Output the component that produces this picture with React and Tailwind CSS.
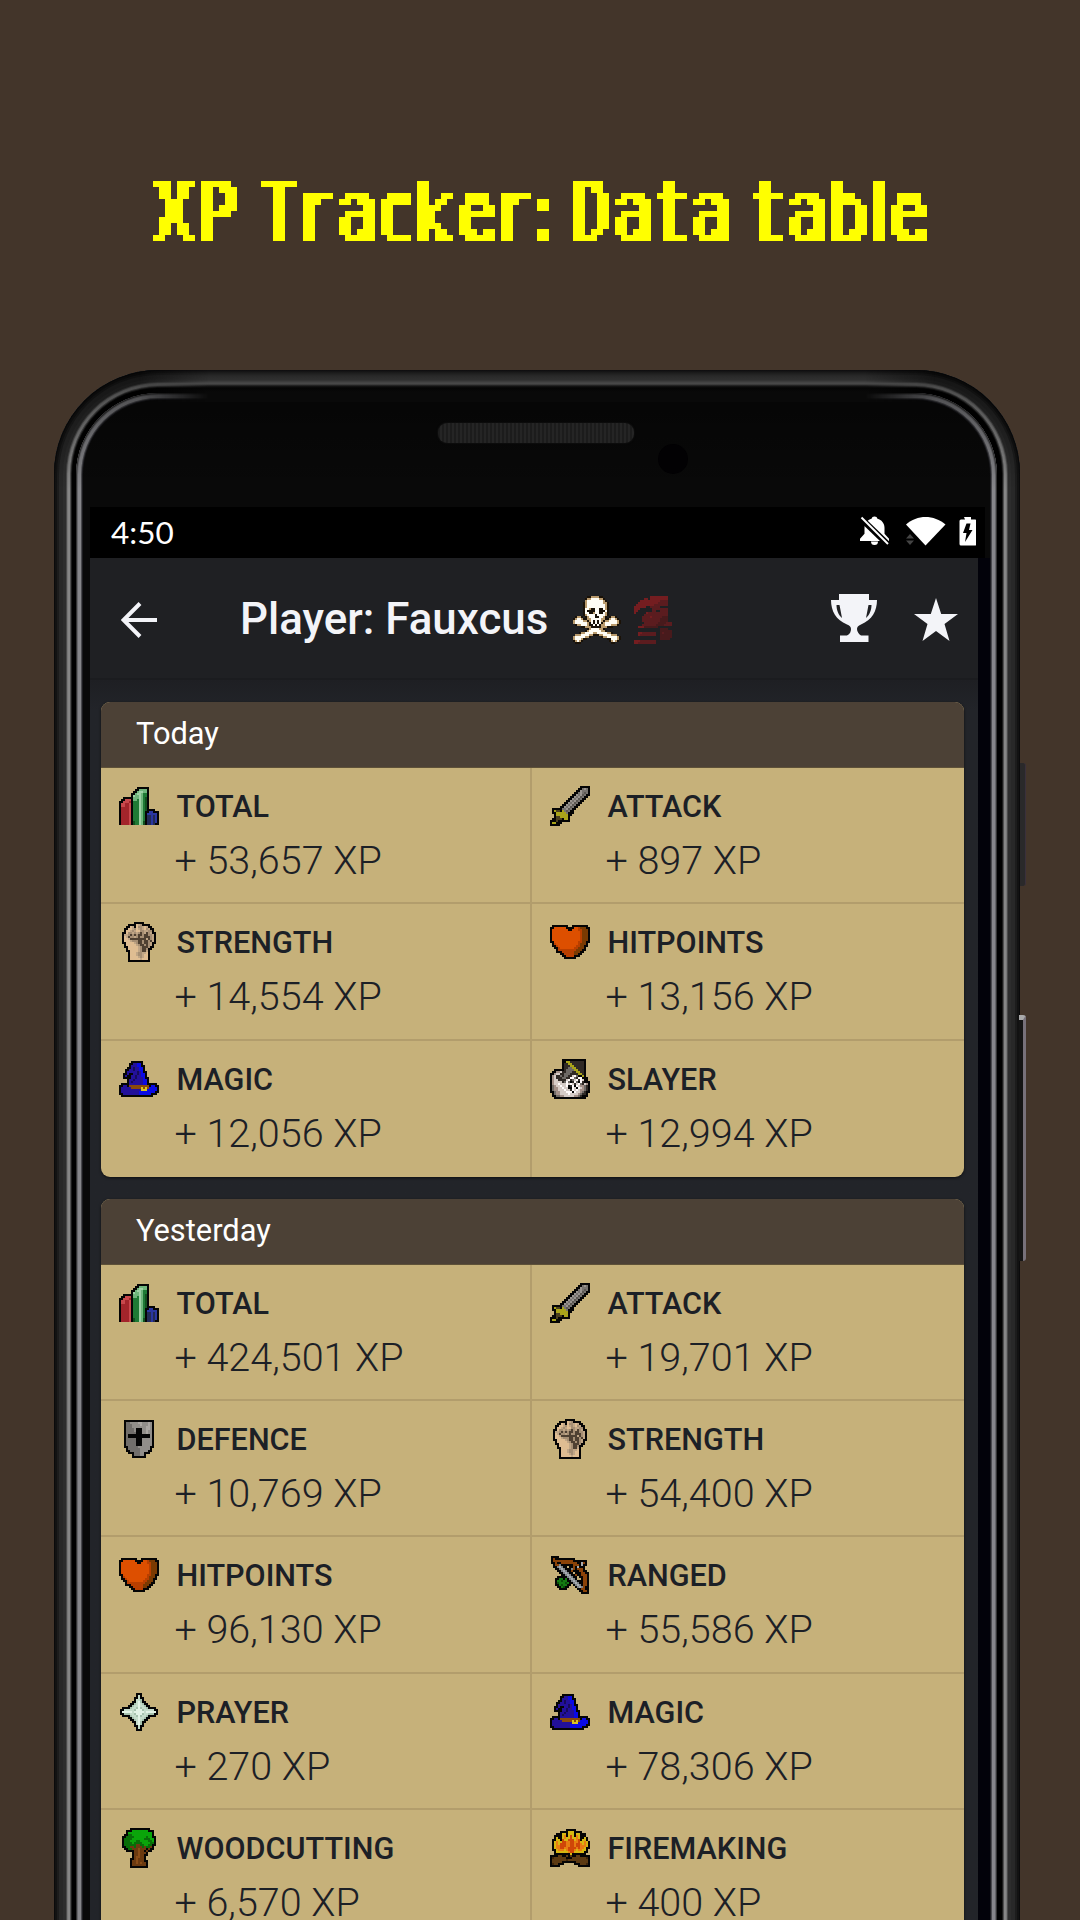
import React from "react";

const TITLE_SIZE = 82;
const STROKE_SPREAD = 3;

// [character, cell width in px, left and right edge of its ink in em]
const TITLE = [
  ["X", 48, 0.03, 0.655], ["P", 42, 0.098, 0.569], [" ", 18], ["T", 42, -0.003, 0.614], ["r", 36, 0.091, 0.411],
  ["a", 42, 0.06, 0.522], ["c", 36, 0.055, 0.488], ["k", 42, 0.091, 0.576], ["e", 42, 0.055, 0.562], ["r", 36, 0.091, 0.411],
  [":", 18, 0.117, 0.22], [" ", 18], ["D", 42, 0.098, 0.711], ["a", 42, 0.06, 0.522], ["t", 36, 0.018, 0.368],
  ["a", 42, 0.06, 0.522], [" ", 18], ["t", 36, 0.018, 0.368], ["a", 42, 0.06, 0.522], ["b", 42, 0.091, 0.58],
  ["l", 18, 0.094, 0.184], ["e", 42, 0.055, 0.562],
];

function glyphTransform(width, left, right) {
  const ink = width - 6 - STROKE_SPREAD * 2;
  const scale = ink / ((right - left) * TITLE_SIZE);
  const shift = 3 + STROKE_SPREAD - left * TITLE_SIZE * scale;
  return `translateX(${shift}px) scaleX(${scale})`;
}

const SPRITES = {
  total: {
    colors: { K: "#050505", R: "#a3252b", S: "#c9484c", G: "#1f7a35", H: "#6fb57c", L: "#9ed1a6", D: "#12501f", B: "#2a36a0", C: "#232a55" },
    rows: [
      ".........KKKKKK.....",
      "........KKHHHHK.....",
      ".......KKHLLHHK.....",
      "......KKHLLHGGK.....",
      "......KLHHLHGGK.....",
      "..KKKKKHHHLHGDK.....",
      ".KKSSSKHHGLHGDK.....",
      "KKSSSRKGGGLHGDK.....",
      "KSSRRSKGGGLHGDK.....",
      "KSSRRSKGGGLHGDK.....",
      "KRRRRSKGGGLHGDK.....",
      "KRRRRSKGGGLHGDKKKK..",
      "KRRRRSKGGGLHGKKBBKKK",
      "KRRRRSKGGGLHGKBBBBBK",
      "KRRRRSKGGGLHGKCCBCBK",
      "KRRRRSKGGGLHGKCCBCBK",
      "KRRRRSKGGGLHGKCCBCBK",
      "KRRRRSKDGGLHDKCCBCBK",
      "KRRRRSKDGGLHDKCCBCKK",
    ],
  },
  attack: {
    colors: { K: "#050505", G: "#77736f", L: "#99948f", D: "#5c5853", Y: "#a9a41a", B: "#4a3f1e" },
    rows: [
      "...............KKKKK",
      "..............KKGLGK",
      ".............KKLGGGK",
      "............KKGLGDGK",
      "...........KKLGLDGKK",
      "..........KKLGLDGKK.",
      ".........KKLGLDGKK..",
      "........KKLGLDGKK...",
      ".......KKLGLDGKK....",
      "......KKLGLDGKK.....",
      ".....KKLGLDGKK......",
      ".KKKKKGGLDGKK.......",
      ".KYBBKYGDGKK........",
      ".KKYYYYYGKKK........",
      "..KYYYYYYKK.........",
      "..KBBYYYYK..........",
      ".KKBBBKYYK..........",
      "KKKBKKKKKK..........",
      "KYYKKK..............",
      "KKKKK...............",
    ],
  },
  strength: {
    colors: { K: "#050505", P: "#dfbd92", G: "#a58e73", D: "#4f4132", H: "#c0a686" },
    rows: [
      "......KKKKK......",
      "...KKKKPHGKKKK...",
      "..KKPHKPGGHPHKK..",
      ".KKPPHGPHGHPGHKK.",
      ".KPPHGHPPGGHHGGK.",
      "KKPGGHGHGDGHDGHKK",
      "KHHGDGDGDDGDDGGHK",
      "KPHDGGHGDGGDDDGHK",
      "KPPHDDDDDDDDHDGHK",
      "KPPPHGGGDDGDDGDHK",
      "KKPPPPHGDDGDDGHKK",
      ".KPPPPPHGDDGDGHK.",
      ".KKPPPPPHGDDDGKK.",
      "..KPPPPPHGDDGKK..",
      "..KKPPPPHGDDHK...",
      "...KPPPHGGHHPK...",
      "...KPPPHGGHPPK...",
      "...KPPPPHGHPPK...",
      "...KPPPPPHPPPK...",
      "...KKKKKKKKKKK...",
    ],
  },
  hitpoints: {
    colors: { K: "#050505", O: "#dd4f00", R: "#b93f00", B: "#7a3a02" },
    rows: [
      ".KKKKKKKK..KKKKKKKK.",
      "KKOOOOOOKKKKOORBBBKK",
      "KOOOOOOOOKKOOORRBBBK",
      "KOOOOOOOOOOOOOORBBBK",
      "KOOOOOOOOOOOOOORBBBK",
      "KOOOOOOOOOOOOOORBBBK",
      "KOOOOOOOOOOOOOORBBBK",
      "KOOOOOOOOOOOOOORBBBK",
      "KKOOOOOOOOOOOORRBBKK",
      ".KROOOOOOOOOOORBBBK.",
      ".KKROOOOOOOOORRBBKK.",
      "..KKROOOOOOORRBBBK..",
      "...KRRRRRRRRRBBBKK..",
      "...KKKRRRRRRBBBKK...",
      ".....KKRRRRRBBKK....",
      "......KKRRRRKKK.....",
      ".......KKKKKK.......",
    ],
  },
  magic: {
    colors: { K: "#050505", B: "#0a0ae6", N: "#22109a", D: "#160a5c", O: "#8a4a0a", Y: "#d9c522" },
    rows: [
      "......KKKKKK........",
      ".....KKNNBBK........",
      ".....KNNNBBKK.......",
      "....KKNDNNBBK.......",
      "...KKNNDNNBBK.......",
      "...KNNNNNDNBKK......",
      "..KKNKKNNDNBBK......",
      "..KNKKNNDNNBBK......",
      "..KKKKNNDNNNBKK.....",
      "....KNNDNNNNBBK.....",
      "....KNDNNNNNBBK.....",
      ".KKKKNNNNNNNBBKKKKK.",
      "KKNNKOOOOOOOOOOKBBKK",
      "KNNNNNOOOOOYOYOBBBBK",
      "KNNNNNNNNNNYYYBBBBBK",
      "KNNNNNNNNNBBBBBBBBKK",
      "KKNNNNNNNNBBBBBBKKK.",
      ".KKKKKKKKKKKKKKKK...",
    ],
  },
  slayer: {
    colors: { K: "#050505", D: "#302a26", Y: "#a9a41a", G: "#6e6a66", P: "#a39088", L: "#d6ccc7", W: "#fffafa" },
    rows: [
      "......KKKKKKKKKKKK..",
      "......KKYYDDDDDDDK..",
      "......KDDYYDDDDDDK..",
      "......KDDDYYDDDDDK..",
      "......KDDGGYYDDDDK..",
      "..KKKKKDGGGGYYDDDK..",
      ".KKPPLDDGGGDDYYDDK..",
      "KKPLLDDGGGDDDDYYDK..",
      "KPLDDGDGGDDLWGKKYK..",
      "KPLDDDGGDDWWGDWWKKK.",
      "KPLLDDDDLWDGLWDWLKK.",
      "KPLLLLDGWGKDWGKWDKKK",
      "KPLLWLLLWLWLDLWGDLPK",
      "KGPLLWLLWKDWKWLPPGDK",
      "KGPPLLWLLKKWLKWLPGDK",
      "KGPPLLLWLLDWLWLPPGDK",
      "KKGPPLLLWWWKWLLPGDKK",
      ".KGPPLLLLWLLLLPGDDK.",
      ".KKGGPPLLLLLPPGDKKK.",
      "..KKKKKKKKKKKKKKKK..",
    ],
  },
  defence: {
    colors: { K: "#050505", G: "#716e6b", L: "#918e8a", H: "#aaa6a2" },
    rows: [
      "KKKKKKKKKKKKKKK",
      "KGGLLLLHHLLLHLK",
      "KGGGLLLLHLLLHLK",
      "KGGGLLLLLLLHHLK",
      "KGGGGLKKKLLHHLK",
      "KGGGGLKKKLLHLLK",
      "KGGGGGKKKLLHLLK",
      "KGKKKKKKKKKKKLK",
      "KGKKKKKKKKKKKLK",
      "KGGGGGKKKLLLLLK",
      "KGGGGGKKKLLLLLK",
      "KGGGGGKKKLLLLLK",
      "KGGGGGKKKLLLLLK",
      "KKGGGGGLLLLLLKK",
      ".KGGGGGGLLLLLK.",
      ".KKGGGGGLLLLKK.",
      "..KKKGGGLLKKK..",
      "....KGGGLLK....",
      "....KKKKKKK....",
    ],
  },
  ranged: {
    colors: { K: "#050505", O: "#8a4208", G: "#7d8287", L: "#a8adb2", E: "#147a12", F: "#0b4d0a" },
    rows: [
      "KKKK...............",
      "KOKKKKKKKKKK.......",
      "KOOOOOOOOOOKKKKKKK.",
      "KKOKKOOOOOOOOKKLOK.",
      ".KOOGKKKKKKOOOKLKK.",
      ".KKGLGKK.KKOKLKKK..",
      "..KKGLGKKKGOKOOOK..",
      "...KKGLGKKOKKKOOKK.",
      "....KKGLGKK.KKKOOKK",
      ".....KKGLGKKOKKOOOK",
      "...KKKKKGLGKK.KKOOK",
      "..KKEEKEKGLGK..KOOK",
      "..KEEFEEKKGLGKKKOOK",
      "..KFEEEFEKKGLGKKOOK",
      "..KKEFEEKK.KGLGKOOK",
      "...KKEFKK...KGLGOKK",
      "....KKKK.....KKOOKK",
      "..............KKOOK",
      "...............KKKK",
    ],
  },
  prayer: {
    colors: { K: "#050505", W: "#e3f3e6", L: "#c6ddcb", G: "#a6c2ae" },
    rows: [
      "........KKK........",
      "........KLK........",
      ".......KKLKK.......",
      ".......KLLGK.......",
      "......KKLWGKK......",
      ".....KKGLWLGKK.....",
      "....KKGLLWLLGKK....",
      ".KKKKGLLGWGLLGKKKK.",
      "KKLLLLLGWWWGLLLLLKK",
      "KWWWWWLWWWWWLWWWWWK",
      "KKGGGLLGWWWGLLGGGKK",
      ".KKKKGLLGWGLLGKKKK.",
      "....KKGLLWLLGKK....",
      ".....KKGLWLGKK.....",
      "......KKLWGKK......",
      ".......KLWGK.......",
      ".......KKLKK.......",
      "........KLK........",
      "........KKK........",
    ],
  },
  woodcutting: {
    colors: { K: "#050505", E: "#0aa50a", F: "#086d08", B: "#6b3a10", C: "#8a4d18" },
    rows: [
      "....KKKKKKKKKK...",
      "..KKKEEEEEEEEKKK.",
      "..KEEEEEEEEEEEEK.",
      ".KKFFEEEEEEEEEEK.",
      "KKFFFFEEEEEEFEEKK",
      "KFFFFEEEEEEFFFEEK",
      "KFFFEEEFFEEEEFFEK",
      "KFFFFEFFFFEEEEFFK",
      "KFFFFFFBBFFEEFFKK",
      "KKFFBBFBBBFBFFBK.",
      ".KKFFBBBCBBBKBKK.",
      "..KKKKBBCBBKBKK..",
      ".....KBBCBBBK....",
      ".....KBBCBBKK....",
      ".....KBCCBBK.....",
      "....KKBCBBBK.....",
      "....KBBCBBBKK....",
      "....KBBCBCBBK....",
      "....KBBBBBBBK....",
      "....KKKKKKKKK....",
    ],
  },
  firemaking: {
    colors: { K: "#050505", Y: "#d6b712", O: "#e87d12", R: "#cf4708", B: "#5c3a12", D: "#3c240a" },
    rows: [
      "........KKKKK.......",
      ".....KKKKYYYKKKK....",
      "...KKKYYKYYYKYYKKK..",
      "..KKKKYOKYRYKOYKKK..",
      "..KYKKYOYYRYYOYKKYK.",
      ".KKYYKRYYRRRYORKYYK.",
      ".KYOYYRROORROORYYOYK",
      ".KYOYRRROORRORROYOYK",
      ".KYOORRROORRORROOOYK",
      ".KYOORROORRRROROOYKK",
      ".KKYOOOYORRROYOOYYK.",
      "..KYYYYYYORRYYYYYKK.",
      "..KKKKKKKKYKKKKKKK..",
      "KKKKBBKKBKBKKBBKKKKK",
      "KDBBBBBBKKKBBBBBBBDK",
      "KBBBBBBBDBBBBBBBBBBK",
      "KBBBBBKKKKKKKBBBBBBK",
      "KDBBKKK.....KKKBBBDK",
      "KKKKK.........KKKKKK",
    ],
  },
  skull: {
    colors: { K: "#1a1208", T: "#b99a6c", W: "#fffdf5" },
    rows: [
      ".......KKTTTTKK.........",
      "......KTTWWWWTTK........",
      "......TWWWWWWWWTK.......",
      ".....KTWWWWWWWWTTK......",
      ".....KTWWWWWWWWWTK......",
      ".....KTWWWWWWWWWTK......",
      ".....KWWTKKWWKKWTK......",
      ".....KWKKKKWWKKKWK......",
      ".....KWWKKTWWKKWTK......",
      ".....KTWWWWKWWWWTK......",
      ".KTTK.KTWWWKKWWTK.KTTK..",
      "KTWWTKKTTWWWWWTTKKTWWTK.",
      "TWWWWTTKTWKWKWTKTTWWWWTK",
      "TWWWWWWTKWKWKWKTWWWWWWTK",
      ".KTTWWWTKKWKWKTTWWWTTTK.",
      "....KKTTTKKKKKTTTKKK....",
      ".......KTWWWWTTK........",
      "......KTWWWWWWTTK.......",
      "...KTTWWWWTTWWWWWTTK....",
      ".TTTWWWWTTKKKTTWWWWTTT..",
      "TWWWWWTTK.....KTTWWWWWTK",
      "TWWWTKK..........KKWWWTK",
      "KTWTK.............KTWTK.",
      ".KKK...............KK...",
    ],
  },
  helm: {
    colors: { R: "#741d20", S: "#5b1c1f", T: "#481a1c" },
    rows: [
      "........RRRRRRRRR..",
      ".....RR.RRRRRRRRR..",
      "...RRRRRRRRRRSSSS..",
      "..RRRRRRRRRRSSSSS..",
      ".RRRRRRRRRSSSSSSS..",
      "RRRRRR..SSSSS......",
      "RRR......SSSSSSSS..",
      "RR.......SS..SSSS..",
      "R.....RSSSSSSSSSS..",
      ".....SSSSSSSSSSSS..",
      "....SSSSRSSSSSTTT..",
      "....SSSSSSSSSTTTT..",
      "....SSSSSSSSSTTTT..",
      ".....SSSSSSSTTTTSSS",
      "....SSSSSSSTTTTSSSS",
      "..RRRTTTTTTT.......",
      ".............TTTT..",
      ".............TTTTTT",
      "..RRSSSSSSS..TSTTTT",
      "..RSSSSSSSS..TTTTTT",
      ".............TTTTTT",
      ".............TTTTT.",
      "RRRSSSSSSSS........",
      "RRSSSSSSSSS........",
    ],
  },
};

function Sprite({ name, unit = 2 }) {
  const { colors, rows } = SPRITES[name];
  const w = Math.max(...rows.map((r) => r.length));
  return (
    <svg width={w * unit} height={rows.length * unit} viewBox={`0 0 ${w} ${rows.length}`} shapeRendering="crispEdges" className="shrink-0">
      {rows.flatMap((row, y) =>
        [...row].map((c, x) => (c === "." ? null : <rect key={`${x}-${y}`} x={x} y={y} width="1" height="1" fill={colors[c]} />))
      )}
    </svg>
  );
}

function Title() {
  return (
    <>
      <svg width="0" height="0" className="absolute">
        <filter id="pixelate" filterUnits="userSpaceOnUse" x="0" y="0" width="792" height="96" colorInterpolationFilters="sRGB">
          <feFlood x="3" y="3" width="1" height="1" floodColor="#000" />
          <feComposite width="6" height="6" />
          <feTile result="dots" />
          <feOffset in="SourceGraphic" dx="-3" dy="0" result="left" />
          <feOffset in="SourceGraphic" dx="3" dy="0" result="right" />
          <feMerge result="thick">
            <feMergeNode in="left" />
            <feMergeNode in="right" />
            <feMergeNode in="SourceGraphic" />
          </feMerge>
          <feComposite in="thick" in2="dots" operator="in" />
          <feComponentTransfer>
            <feFuncA type="discrete" tableValues="0 1" />
          </feComponentTransfer>
          <feMorphology operator="dilate" radius="2" result="five" />
          <feOffset in="five" dx="-1" dy="0" result="shiftX" />
          <feMerge result="wide">
            <feMergeNode in="five" />
            <feMergeNode in="shiftX" />
          </feMerge>
          <feOffset in="wide" dx="0" dy="-1" result="shiftY" />
          <feMerge>
            <feMergeNode in="wide" />
            <feMergeNode in="shiftY" />
          </feMerge>
        </filter>
      </svg>
      <h1
        className="ml-[147px] flex h-[96px] w-[792px] pl-[3px] font-['DejaVu_Sans',sans-serif] text-[82px] leading-[75px] font-normal text-[#ffff00] [filter:url(#pixelate)]"
        aria-label="XP Tracker: Data table"
      >
        {TITLE.map(([c, w, left, right], i) => (
          <span key={i} className="block h-[75px] shrink-0 whitespace-pre" style={{ width: w }}>
            <span className="inline-block origin-left" style={{ transform: c === " " ? undefined : glyphTransform(w, left, right) }}>
              {c}
            </span>
          </span>
        ))}
      </h1>
    </>
  );
}

function Entry({ icon, label, xp, right, last }) {
  return (
    <div
      className={
        "flex h-[136.3px] pt-[18px] " +
        (right ? "pl-[17.5px] " : "border-r-2 border-r-[#b29d6c] pl-[17.5px] ") +
        (last ? "" : "border-b-2 border-b-[#b29d6c]")
      }
    >
      <div className="flex h-10 w-10 items-center justify-center">
        <Sprite name={icon} />
      </div>
      <div className="pl-[18px] font-[Roboto,sans-serif] whitespace-nowrap text-[#1c2026]">
        <div className="h-[44px] text-[30.6px] leading-[42px] font-medium">{label}</div>
        <div className="-ml-[2px] text-[39.5px] leading-[61px] font-light">+ {xp} XP</div>
      </div>
    </div>
  );
}

function Card({ title, entries }) {
  return (
    <section className="overflow-hidden rounded-[9px] bg-[#c6b17a] shadow-[0_1px_3px_rgba(0,0,0,0.6)]">
      <h2 className="h-[66px] border-b border-[#5e5138] bg-[#4c4136] pl-[35px] font-[Roboto,sans-serif] text-[30.8px] leading-[64px] font-normal text-white">{title}</h2>
      <div className="grid grid-cols-[431px_1fr]">
        {entries.map(([icon, label, xp], i) => (
          <Entry key={label} icon={icon} label={label} xp={xp} right={i % 2 === 1} last={i >= entries.length - 2} />
        ))}
      </div>
    </section>
  );
}

const TODAY = [
  ["total", "TOTAL", "53,657"],
  ["attack", "ATTACK", "897"],
  ["strength", "STRENGTH", "14,554"],
  ["hitpoints", "HITPOINTS", "13,156"],
  ["magic", "MAGIC", "12,056"],
  ["slayer", "SLAYER", "12,994"],
];

const YESTERDAY = [
  ["total", "TOTAL", "424,501"],
  ["attack", "ATTACK", "19,701"],
  ["defence", "DEFENCE", "10,769"],
  ["strength", "STRENGTH", "54,400"],
  ["hitpoints", "HITPOINTS", "96,130"],
  ["ranged", "RANGED", "55,586"],
  ["prayer", "PRAYER", "270"],
  ["magic", "MAGIC", "78,306"],
  ["woodcutting", "WOODCUTTING", "6,570"],
  ["firemaking", "FIREMAKING", "400"],
];

function StatusBar() {
  return (
    <div className="flex h-[51px] w-[895px] bg-black pl-[21px] text-white">
      <div className="w-[749px] font-[Lato,sans-serif] text-[31.5px] leading-[51px]">4:50</div>
      <svg width="116" height="31" viewBox="0 0 116 31" className="mt-[9px]" fill="#fff">
        <path d="M14.5 0.5a3 3 0 0 1 3 2.3c4 1 7 4.500 7 9v6l4.500 5v2.200H0v-2.200l4.500-5v-6c0-4 3-8 7-9a3 3 0 0 1 3-2.300zM11 25.500h7a3.500 3.500 0 0 1-7 0z" />
        <path d="M1 2.500 28 28.500" stroke="#000" strokeWidth="6" />
        <path d="M1.500 1.500 28 28" stroke="#fff" strokeWidth="2" />
        <path d="M46 8.500C57-1.500 74-1.500 85.500 8.500L65.500 29.500z" />
        <path d="M46 22.500h8l-4-4.500zM46 24.500h8l-4 4.500z" fill="#444" />
        <path d="M104 1h7v2.500h4a1.500 1.500 0 0 1 1.500 1.500v23a1.500 1.500 0 0 1-1.500 1.500h-14a1.500 1.500 0 0 1-1.500-1.500v-23a1.500 1.500 0 0 1 1.500-1.500h4z" />
        <path d="M106.500 7.500h4l-1.500 6.500h3.500l-7.500 12 1.500-9h-3.500z" fill="#000" />
      </svg>
    </div>
  );
}

function AppBar() {
  return (
    <div className="flex h-[122px] items-center border-b-2 border-[#1b1c1f] bg-[#1f2023] pt-[3px] text-[#f3f4f8]">
      <svg width="36" height="36" viewBox="0 0 36 36" className="ml-[31px]" fill="none" stroke="currentColor" strokeWidth="4">
        <path d="M36 18H3M19 1.500 2.500 18 19 34.500" />
      </svg>
      <div className="ml-[83px] w-[333px] pb-px font-[Roboto,sans-serif] text-[43.9px] leading-[60px] font-medium whitespace-nowrap">Player: Fauxcus</div>
      <Sprite name="skull" />
      <div className="ml-[13px]">
        <Sprite name="helm" />
      </div>
      <svg width="46" height="48" viewBox="0 0 46 48" className="mb-[3px] ml-[159px]" fill="currentColor">
        <path
          fillRule="evenodd"
          d="M8 0h30v6h8c0 11-5 20-16 24.500-3 1.500-4 2.500-4 4.500s1.500 5 4 6.500h7.500V48H9V41.500h7c3-1.500 4-4 4-6.500s-1.500-3.500-4-4.500C5 26 0 17 0 6h8zM5.500 11c0 5 2 10 5.500 13L8.500 11zM40.500 11h-3L35 24c3.500-3 5.500-8 5.500-13z"
        />
      </svg>
      <svg width="44" height="44" viewBox="0 0 44 44" className="ml-[37px]" fill="currentColor">
        <path d="M22 0l5.200 16H44L30.500 26l5 17L22 33 8.500 43l5-17L0 16h16.800z" />
      </svg>
    </div>
  );
}

function Phone() {
  return (
    <div className="relative mt-[99px] ml-[54px] h-[1600px] w-[966px] rounded-t-[104px] bg-black shadow-[inset_0_0_0_1px_#0a0a0b,inset_0_0_0_3px_#121212,inset_0_0_0_5px_#1c1c1c,inset_0_0_0_9px_#282828,inset_0_0_0_12px_#2d2d2d,inset_0_0_0_13px_#4a4a4a,inset_0_0_0_14px_#777,inset_0_0_0_16px_#868686,inset_0_0_0_17px_#505050,inset_0_0_0_18px_#1c1c1c]">
      <div className="absolute top-[393px] left-[966px] h-[123px] w-[6px] rounded-r-[3px] border-r border-[#3a303b] bg-[#2a292a]" />
      <div className="absolute top-[645px] left-[965px] h-[246px] w-[7px] rounded-r-[3px] border-t-[5px] border-r-[3px] border-t-[#aaa] border-r-[#77717a] bg-[#151515]" />
      <div className="ml-[22px] h-full w-[921px] pt-[23px]">
        <div className="h-[1577px] rounded-t-[82px] bg-[#090909] shadow-[inset_0_0_0_1px_#333,inset_0_0_0_2px_#66666a,inset_0_0_0_5px_#86868a,inset_0_0_0_6px_#4a4a4e,inset_0_0_0_7px_#1c1c20]">
          <div className="h-[114px]" />
          <div className="pl-[14px]">
            <StatusBar />
            <div className="w-[900px] bg-gradient-to-r from-[#222429] from-[888px] to-[#02020a] to-[888px]">
              <div className="w-[888px] overflow-hidden bg-[#222429]">
                <AppBar />
                <main className="flex flex-col gap-[22px] bg-gradient-to-b from-[#1e1f23] to-[#222429] to-[30px] pt-[22px] pr-[14.5px] pl-[11px]">
                  <Card title="Today" entries={TODAY} />
                  <Card title="Yesterday" entries={YESTERDAY} />
                </main>
              </div>
            </div>
          </div>
        </div>
      </div>
      <div className="absolute top-0 left-0 h-[120px] w-[966px] rounded-t-[104px] bg-gradient-to-b from-black/50 via-black/25 to-transparent" />
      <div className="absolute top-0 left-[60px] h-[32px] w-[846px] bg-[linear-gradient(to_bottom,#0d0c0e_0px,#1d1d1d_3px,#292929_6px,#303030_10px,#484848_13px,#484848_14px,#161616_16px,#050505_18px,#090909_22px)] [mask-image:linear-gradient(to_right,transparent_25px,black_95px,black_751px,transparent_821px)]" />
      <div className="absolute top-[53px] left-[384px] h-[20px] w-[196px] rounded-[9px] bg-[repeating-linear-gradient(to_right,#1c1c1c_0px,#1c1c1c_2px,#252525_2px,#252525_4px)] shadow-[0_0_2px_#1b1b1b]" />
      <div className="absolute top-[74px] left-[604px] h-[30px] w-[30px] rounded-full bg-[#020103]" />
    </div>
  );
}

export default function App() {
  return (
    <div className="h-[1920px] w-[1080px] overflow-hidden bg-[#43352a] pt-[175px]">
      <Title />
      <Phone />
    </div>
  );
}
